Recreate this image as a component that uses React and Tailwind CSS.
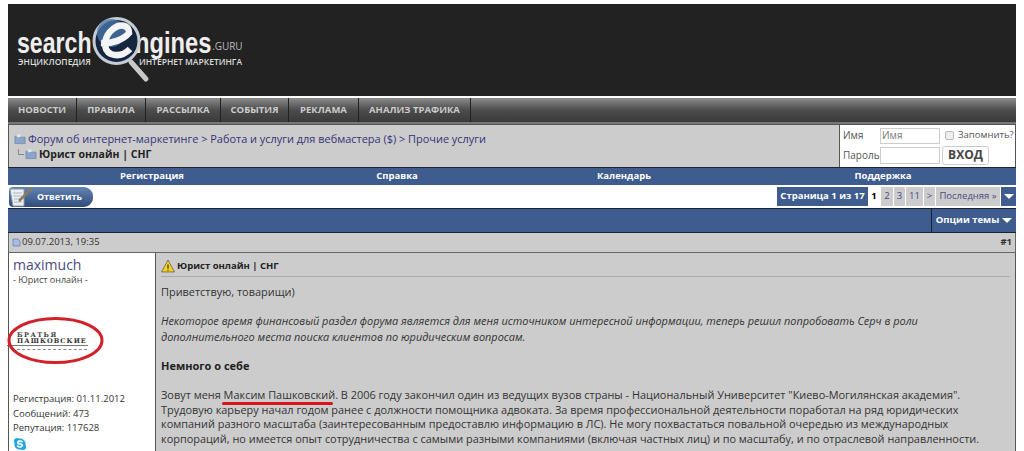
import { FaSkype } from 'react-icons/fa';

const font = { fontFamily: '"Open Sans", sans-serif' };
const logoFont = { fontFamily: '"Liberation Sans", sans-serif' };
const slabFont = { fontFamily: '"DejaVu Serif", serif' };

const navItems = ['НОВОСТИ', 'ПРАВИЛА', 'РАССЫЛКА', 'СОБЫТИЯ', 'РЕКЛАМА', 'АНАЛИЗ ТРАФИКА'];
const navWidths = ['w-[69px]', 'w-[69px]', 'w-[75px]', 'w-[68px]', 'w-[70px]', 'w-[112px]'];

const Logo = () => (
  <div className="relative h-[92px] w-[300px]">
    <span className="absolute left-[9px] top-[29px] origin-left scale-x-[0.77] text-[30px] font-bold leading-[20px] text-[#eee]" style={logoFont}>search</span>
    <span className="absolute left-[127px] top-[29px] origin-left scale-x-[0.79] text-[30px] font-bold leading-[20px] text-[#eee]" style={logoFont}>ngines</span>
    <span className="absolute left-[204px] top-[34px] text-[10px] leading-[16px] text-[#bbb]">.GURU</span>
    <span className="absolute left-[10px] top-[52px] text-[8.5px] font-semibold leading-[12px] text-[#ddd]">ЭНЦИКЛОПЕДИЯ</span>
    <span className="absolute left-[131px] top-[52px] text-[8.5px] font-semibold leading-[12px] text-[#ddd]">ИНТЕРНЕТ МАРКЕТИНГА</span>
    <svg className="absolute left-[83px] top-[12px]" width="70" height="72" viewBox="0 0 70 72">
      <line x1="40" y1="46" x2="55" y2="63" stroke="#c8c8c8" strokeWidth="5" strokeLinecap="round" />
      <circle cx="25.5" cy="25" r="22.5" fill="#16263f" stroke="#c4ccd4" strokeWidth="3" />
      <circle cx="20" cy="17" r="14" fill="#4a78ad" opacity="0.75" />
      <path d="M10 27 C22 28 33 23 38 17 C38 9 29 7 22 13 C13 20 11 34 20 38 C28 41 35 37 39 33" fill="none" stroke="#f4f4f4" strokeWidth="6.5" />
    </svg>
  </div>
);

const FolderIcon = () => (
  <svg width="12" height="12" viewBox="0 0 13 12">
    <path d="M1 3h4l1 1h6v7H1z" fill="#8aa4cc" stroke="#5c76a0" strokeWidth="0.6" />
    <path d="M3 1h4v3H3z" fill="#e6e6e6" />
  </svg>
);

const Pagination = () => (
  <div className="flex h-[19px] items-stretch text-[9.5px]">
    <div className="flex w-[91px] items-center justify-center bg-[#3e5c8e] font-bold text-white">Страница 1 из 17</div>
    <div className="flex w-[12px] items-center justify-center bg-white font-bold text-black">1</div>
    <div className="ml-px flex w-[12px] items-center justify-center bg-[#ccc] text-[#4b4a82]">2</div>
    <div className="ml-px flex w-[11px] items-center justify-center bg-[#ccc] text-[#4b4a82]">3</div>
    <div className="ml-px flex w-[17px] items-center justify-center bg-[#ccc] text-[#4b4a82]">11</div>
    <div className="ml-px flex w-[11px] items-center justify-center bg-[#ccc] text-[#4b4a82]">&gt;</div>
    <div className="ml-px flex w-[64px] items-center justify-center bg-[#ccc] text-[#4b4a82]">Последняя »</div>
    <div className="ml-px flex w-[15px] items-center justify-center bg-[#3e5c8e]">
      <span className="h-0 w-0 border-x-[5px] border-t-[5px] border-x-transparent border-t-white" />
    </div>
  </div>
);

export default function App() {
  return (
    <div className="h-[451px] overflow-hidden bg-white pt-[4px]" style={font}>
      <div className="mx-[8px] w-[1008px]">
        <div className="h-[92px] bg-[#222]"><Logo /></div>

        <div className="mt-[2px] flex h-[26px] border-b-2 border-[#777] bg-gradient-to-b from-[#8c8c8c] via-[#4c4c4c] to-[#3a3a3a]">
          {navItems.map((item, i) => (
            <div key={item} className={`flex items-center justify-center border-r border-[#222] pt-[1px] text-[9.5px] font-bold text-[#ccc] ${navWidths[i]}`}>
              {item}
            </div>
          ))}
        </div>

        <div className="flex h-[43px] border-x border-t border-[#555] bg-[#ccc]">
          <div className="flex-1 pl-[5px] pt-[7px] text-[10.95px] leading-[14.5px]">
            <div className="flex items-center gap-[2px] text-[#33337a]">
              <FolderIcon />
              <span>Форум об интернет-маркетинге &gt; Работа и услуги для вебмастера ($) &gt; Прочие услуги</span>
            </div>
            <div className="flex items-center gap-[1px] pl-[4px] font-bold text-[#222]">
              <span className="mb-[3px] h-[6px] w-[6px] border-b border-l border-[#888]" />
              <FolderIcon />
              <span className="ml-[1px] text-[10.5px]">Юрист онлайн | СНГ</span>
            </div>
          </div>
          <div className="w-[176px] border-l border-[#555] bg-white pl-[3px] pt-[1px] text-[10px] text-[#555]">
            <div className="flex h-[19px] items-center">
              <span className="w-[37px]">Имя</span>
              <span className="flex h-[16px] w-[60px] items-center border border-[#ccc] pl-[1px] text-[#777]">Имя</span>
              <span className="ml-[5px] h-[9px] w-[9px] rounded-[2px] border border-[#bbb] bg-[#eee]" />
              <span className="ml-[4px] text-[9.5px]">Запомнить?</span>
            </div>
            <div className="flex h-[20px] items-center">
              <span className="w-[37px]">Пароль</span>
              <span className="h-[17px] w-[60px] border border-[#ccc]" />
              <span className="ml-[2px] flex h-[19px] w-[47px] items-center justify-center rounded-[3px] border border-[#ccc] text-[12px] font-bold text-[#444]">ВХОД</span>
            </div>
          </div>
        </div>

        <div className="grid h-[18px] grid-cols-[288px_202px_252px_266px] border-t border-[#223] bg-[#3e5c8e] text-[9.5px] font-bold text-white">
          <div className="flex items-center justify-center">Регистрация</div>
          <div className="flex items-center justify-center">Справка</div>
          <div className="flex items-center justify-center">Календарь</div>
          <div className="flex items-center justify-center">Поддержка</div>
        </div>

        <div className="flex h-[23px] items-center justify-between">
          <div className="relative ml-[1px] flex h-[20px] w-[84px] items-center justify-end rounded-r-[9px] rounded-l-[4px] bg-gradient-to-b from-[#6484b2] to-[#2f4c7c] pr-[11px] text-[9px] font-bold text-white">
            Ответить
            <svg className="absolute -left-[1px] -top-[1px]" width="26" height="22" viewBox="0 0 26 22">
              <path d="M2 3h14v17H5z" fill="#eef1f4" stroke="#8c98a8" />
              <path d="M5 7h9M5 10h9M6 13h8M6 16h8" stroke="#a9b3c0" />
              <path d="M11 15L24 2" stroke="#8a7a5c" strokeWidth="2.5" />
            </svg>
          </div>
          <Pagination />
        </div>

        <div className="flex h-[25px] justify-end border-y border-[#1a2233] bg-[#3e5c8e]">
          <div className="flex w-[85px] items-center justify-center gap-[3px] border-l border-[#1a2233] text-[9.5px] font-bold text-white">
            Опции темы
            <span className="h-0 w-0 border-x-[5px] border-t-[5px] border-x-transparent border-t-white" />
          </div>
        </div>

        <div className="flex h-[20px] items-center justify-between border-x border-b border-[#666] bg-[#ccc] pl-[3px] pr-[3px] text-[9.5px] text-[#333]">
          <div className="flex items-center gap-[1px]">
            <svg width="9" height="9" viewBox="0 0 9 9"><path d="M1 1h5l2 2v5H1z" fill="#a8bde2" stroke="#5a76b4" strokeWidth="0.7" /></svg>
            09.07.2013, 19:35
          </div>
          <span className="font-bold">#1</span>
        </div>

        <div className="flex h-[200px] border-x border-[#555]">
          <div className="w-[146px] shrink-0 pl-[4px] pt-[3px]">
            <div className="text-[14px] leading-[18px] text-[#4b4a82]">maximuch</div>
            <div className="text-[9px] leading-[12px] text-[#444]">- Юрист онлайн -</div>
            <div className="relative -ml-[6px] mt-[31px] flex h-[47px] w-[97px] flex-col justify-center">
              <svg className="absolute left-0 top-0" width="97" height="47" viewBox="0 0 97 47">
                <ellipse cx="48.5" cy="23.5" rx="46.5" ry="22" fill="none" stroke="#d1222a" strokeWidth="3" />
              </svg>
              <div className="pl-[10px] text-[6.5px] font-bold leading-[6.5px] tracking-[1.5px] text-[#444]" style={slabFont}>БРАТЬЯ</div>
              <div className="w-[81px] border-b border-[#777] pl-[10px] text-[6.5px] font-bold leading-[6.5px] tracking-[1.1px] text-[#333]" style={slabFont}>ПАШКОВСКИЕ</div>
              <div className="ml-[10px] mt-[3px] h-px w-[70px] border-t border-dashed border-[#888]" />
            </div>
            <div className="mt-[28px] text-[9.5px] leading-[14.5px] text-[#333]">
              <div>Регистрация: 01.11.2012</div>
              <div>Сообщений: 473</div>
              <div>Репутация: 117628</div>
            </div>
            <FaSkype className="mt-[1px] text-[14px] text-[#1ea5e5]" />
          </div>

          <div className="flex-1 border-l border-[#555] bg-[#ccc] pl-[5px] pr-[5px] pt-[4px] text-[#333]">
            <div className="flex h-[20px] items-center gap-[2px] border-b border-[#aaa] pb-[1px] text-[9.5px] font-bold text-[#222]">
              <svg width="14" height="14" viewBox="0 0 13 13">
                <path d="M6.5 1L12.5 12H0.5z" fill="#f7d21e" stroke="#555" strokeWidth="0.7" />
                <path d="M6.5 5v4M6.5 10v1" stroke="#222" strokeWidth="1" />
              </svg>
              Юрист онлайн | СНГ
            </div>
            <div className="mt-[7px] text-[10.93px] leading-[15px]">Приветствую, товарищи)</div>
            <div className="mt-[14px] text-[10.93px] italic leading-[16px]">
              Некоторое время финансовый раздел форума является для меня источником интересной информации, теперь решил попробовать Серч в роли<br />
              дополнительного места поиска клиентов по юридическим вопросам.
            </div>
            <div className="mt-[13px] text-[11px] font-bold leading-[15px] text-[#222]">Немного о себе</div>
            <div className="mt-[15px] text-[10.93px] leading-[14.7px]">
              Зовут меня <span className="relative">Максим Пашковский<span className="absolute -left-[2px] right-[2px] -bottom-[3px] h-[3px] rounded-full bg-[#d9141c]" /></span>. В 2006 году закончил один из ведущих вузов страны - Национальный Университет "Киево-Могилянская академия".<br />
              Трудовую карьеру начал годом ранее с должности помощника адвоката. За время профессиональной деятельности поработал на ряд юридических<br />
              компаний разного масштаба (заинтересованным предоставлю информацию в ЛС). Не могу похвастаться повальной очередью из международных<br />
              корпораций, но имеется опыт сотрудничества с самыми разными компаниями (включая частных лиц) и по масштабу, и по отраслевой направленности.
            </div>
          </div>
        </div>
      </div>
    </div>
  );
}
